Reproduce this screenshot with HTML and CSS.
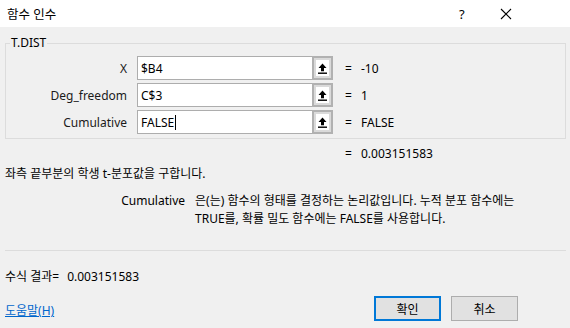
FILE: index.html
```html
<!DOCTYPE html>
<html lang="ko">
<head>
<meta charset="UTF-8">
<title>함수 인수</title>
<link rel="stylesheet" href="styles.css">
</head>
<body>
<div class="dialog">
	<div class="titlebar">
		<span class="title">함수 인수</span>
		<span class="help">?</span>
		<svg class="close" width="12" height="12" viewBox="0 0 12 12"><path d="M1 1L11 11M11 1L1 11" stroke="#000" stroke-width="1.1" fill="none"/></svg>
	</div>
	<fieldset class="args">
		<legend>T.DIST</legend>
		<div class="argrow">
			<label>X</label>
			<div class="field"><span class="txt">$B4</span></div>
			<div class="pick"><span class="pickin"><svg width="9" height="11" viewBox="0 0 9 11"><path d="M4.5 0.5L8.5 5H6V8.2H3V5H0.5Z" fill="#000"/><rect x="0" y="9.5" width="9" height="1.4" fill="#000"/></svg></span></div>
			<span class="eq">=</span>
			<span class="val">-10</span>
		</div>
		<div class="argrow">
			<label>Deg_freedom</label>
			<div class="field"><span class="txt">C$3</span></div>
			<div class="pick"><span class="pickin"><svg width="9" height="11" viewBox="0 0 9 11"><path d="M4.5 0.5L8.5 5H6V8.2H3V5H0.5Z" fill="#000"/><rect x="0" y="9.5" width="9" height="1.4" fill="#000"/></svg></span></div>
			<span class="eq">=</span>
			<span class="val">1</span>
		</div>
		<div class="argrow">
			<label>Cumulative</label>
			<div class="field"><span class="txt">FALSE</span><span class="caret"></span></div>
			<div class="pick"><span class="pickin"><svg width="9" height="11" viewBox="0 0 9 11"><path d="M4.5 0.5L8.5 5H6V8.2H3V5H0.5Z" fill="#000"/><rect x="0" y="9.5" width="9" height="1.4" fill="#000"/></svg></span></div>
			<span class="eq">=</span>
			<span class="val">FALSE</span>
		</div>
	</fieldset>
	<div class="result"><span class="eq">=</span><span class="val">0.003151583</span></div>
	<p class="summary">좌측 끝부분의 학생 t-분포값을 구합니다.</p>
	<div class="argdesc">
		<span class="argname">Cumulative</span>
		<span class="argtext">은(는) 함수의 형태를 결정하는 논리값입니다. 누적 분포 함수에는 TRUE를, 확률 밀도 함수에는 FALSE를 사용합니다.</span>
	</div>
	<hr class="sep">
	<div class="formula">수식 결과=<span class="fval">0.003151583</span></div>
	<div class="footer">
		<a class="helplink" href="#">도움말(H)</a>
		<button class="btn primary">확인</button>
		<button class="btn">취소</button>
	</div>
</div>
</body>
</html>
```

FILE: styles.css
```css
html, body {
	margin: 0;
	padding: 0;
}
body {
	width: 570px;
	height: 328px;
	overflow: hidden;
	background: #f0f0f0;
	font-family: "Noto Sans", "Noto Sans CJK KR", sans-serif;
	font-size: 12px;
	color: #000;
}

.titlebar {
	display: flex;
	align-items: center;
	height: 27px;
	background: #fff;
	padding-left: 7px;
}
.title {
	flex: 1;
	font-size: 12.5px;
}
.help {
	width: 12px;
	font-size: 13px;
	margin-right: 29px;
}
.close {
	margin-right: 58px;
}

.args {
	margin: 8px 4px 0 5px;
	padding: 5px 0 4px 0;
	border: 1px solid #dcdcdc;
}
.args legend {
	padding: 0 1px;
	margin-left: 4px;
	line-height: 16px;
}
.argrow {
	display: flex;
	align-items: center;
	height: 24px;
	margin-bottom: 3px;
}
.argrow:last-child {
	margin-bottom: 0;
}
.argrow label {
	width: 121px;
	text-align: right;
	margin-right: 10px;
	color: #1a1a1a;
}
.field {
	box-sizing: border-box;
	width: 175px;
	height: 24px;
	background: #fff;
	border: 1px solid #adadad;
	border-right: none;
	display: flex;
	align-items: center;
	padding-left: 3px;
}
.caret {
	display: inline-block;
	width: 1px;
	height: 15px;
	background: #000;
	margin-left: 1px;
}
.pick {
	box-sizing: border-box;
	width: 21px;
	height: 24px;
	border: 2px solid #b1b1b1;
	background: #dadada;
	display: flex;
	align-items: center;
	justify-content: center;
}
.pickin {
	width: 13px;
	height: 16px;
	background: #fff;
	display: flex;
	align-items: center;
	justify-content: center;
}
.eq {
	margin-left: 12px;
	width: 16px;
}

.result {
	display: flex;
	padding-left: 333px;
	margin-top: 7px;
	line-height: 16px;
}
.summary {
	margin: 4px 0 0 5px;
	line-height: 16px;
}
.argdesc {
	display: flex;
	margin-top: 10px;
	line-height: 18px;
}
.argname {
	width: 185px;
	text-align: right;
	flex-shrink: 0;
}
.argtext {
	width: 320px;
	margin-left: 10px;
}
.sep {
	margin: 22px 4px 0 5px;
	border: none;
	border-top: 1px solid #dcdcdc;
	height: 0;
}
.formula {
	margin: 18px 0 0 5px;
	line-height: 16px;
}
.fval {
	margin-left: 8px;
}
.footer {
	display: flex;
	align-items: center;
	margin-top: 11px;
	padding-left: 5px;
}
.helplink {
	color: #0066cc;
	text-decoration: underline;
	margin-right: auto;
	margin-top: 3px;
}
.btn {
	box-sizing: border-box;
	width: 67px;
	height: 25px;
	background: #e1e1e1;
	border: 1px solid #adadad;
	font-family: inherit;
	font-size: 12px;
	padding: 0;
	margin-right: 10px;
}
.btn.primary {
	border: 2px solid #0078d7;
}
.btn:last-child {
	margin-right: 52px;
}
```
